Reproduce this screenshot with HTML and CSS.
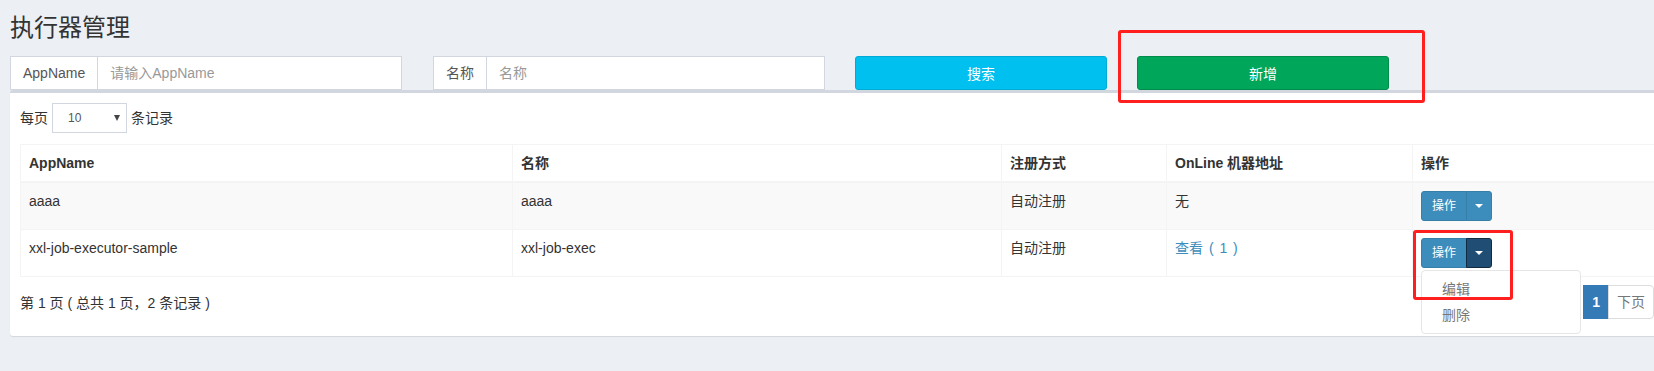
FILE: index.html
```html
<!DOCTYPE html>
<html lang="zh-CN">
<head>
<meta charset="utf-8">
<title>执行器管理</title>
<link rel="stylesheet" href="styles.css">
</head>
<body>
<div class="page">
  <section class="content-header">
    <h1>执行器管理</h1>
  </section>
  <section class="content">
    <div class="filters">
      <div class="input-group">
        <span class="addon">AppName</span>
        <input class="form-control" type="text" placeholder="请输入AppName">
      </div>
      <div class="input-group input-group-last">
        <span class="addon">名称</span>
        <input class="form-control" type="text" placeholder="名称">
      </div>
      <button class="btn btn-search" type="button">搜索</button>
      <div class="mark-wrap">
        <button class="btn btn-add" type="button">新增</button>
        <div class="mark mark-add"></div>
      </div>
    </div>

    <div class="box">
      <div class="length">
        <span>每页</span>
        <span class="select"><span class="select-val">10</span><span class="select-arrow"></span></span>
        <span>条记录</span>
      </div>

      <table class="grid">
        <colgroup>
          <col class="c1"><col class="c2"><col class="c3"><col class="c4"><col class="c5">
        </colgroup>
        <thead>
          <tr>
            <th>AppName</th>
            <th>名称</th>
            <th>注册方式</th>
            <th>OnLine 机器地址</th>
            <th>操作</th>
          </tr>
        </thead>
        <tbody>
          <tr class="odd">
            <td>aaaa</td>
            <td>aaaa</td>
            <td>自动注册</td>
            <td>无</td>
            <td>
              <div class="btn-group">
                <button class="btn-sm btn-op" type="button">操作</button><button class="btn-sm btn-toggle" type="button"><span class="caret"></span></button>
              </div>
            </td>
          </tr>
          <tr>
            <td>xxl-job-executor-sample</td>
            <td>xxl-job-exec</td>
            <td>自动注册</td>
            <td><a class="link" href="#">查看 ( 1 )</a></td>
            <td>
              <div class="btn-group open">
                <button class="btn-sm btn-op" type="button">操作</button><button class="btn-sm btn-toggle active" type="button"><span class="caret"></span></button>
                <ul class="dropdown-menu">
                  <li>编辑</li>
                  <li>删除</li>
                </ul>
                <div class="mark mark-op"></div>
              </div>
            </td>
          </tr>
        </tbody>
      </table>

      <div class="table-footer">
        <div class="info">第 1 页 ( 总共 1 页，2 条记录 )</div>
        <ul class="pagination">
          <li class="active"><span>1</span></li>
          <li class="disabled"><span>下页</span></li>
        </ul>
      </div>
    </div>
  </section>
</div>
</body>
</html>
```

FILE: styles.css
```css
html, body {
  margin: 0;
  padding: 0;
  overflow: hidden;
  background: #ecf0f5;
}

body {
  font-family: "Liberation Sans", Arial, "Noto Sans CJK SC", sans-serif;
  font-size: 14px;
  line-height: 20px;
  color: #333;
}

.page {
  width: 1654px;
  height: 371px;
  overflow: hidden;
}

.content-header {
  padding: 15px 10px 0 10px;
}

.content-header h1 {
  margin: 0;
  font-size: 24px;
  line-height: 26px;
  font-weight: normal;
  color: #333;
}

.content {
  padding: 15px 0 0 10px;
}

/* filters row */
.filters {
  display: flex;
  align-items: stretch;
  height: 34px;
}

.input-group {
  display: flex;
  width: 392px;
  height: 34px;
  box-sizing: border-box;
  margin-right: 31px;
  background: #fff;
}

.input-group-last {
  margin-right: 30px;
}

.addon {
  display: flex;
  align-items: center;
  padding: 0 12px;
  border: 1px solid #d2d6de;
  color: #555;
  background: #fff;
  white-space: nowrap;
}

.form-control {
  flex: 1;
  min-width: 0;
  height: 34px;
  box-sizing: border-box;
  border: 1px solid #d2d6de;
  border-left: 0;
  padding: 6px 12px;
  font-family: inherit;
  font-size: 14px;
  color: #555;
  outline: none;
  background: #fff;
}

.form-control::placeholder {
  color: #999;
}

.btn {
  width: 252px;
  height: 34px;
  box-sizing: border-box;
  border-radius: 3px;
  border: 1px solid transparent;
  color: #fff;
  font-family: inherit;
  font-size: 14px;
  padding: 0;
  cursor: pointer;
}

.btn-search {
  background: #00c0ef;
  border-color: #00acd6;
  margin-right: 30px;
}

.btn-add {
  display: block;
  background: #00a65a;
  border-color: #008d4c;
}

.mark-wrap {
  position: relative;
}

.mark {
  position: absolute;
  border: 3px solid #ff1f1f;
  border-radius: 3px;
  pointer-events: none;
}

.mark-add {
  left: -19px;
  top: -26px;
  right: -36px;
  bottom: -13px;
}

/* box */
.box {
  width: 1654px;
  box-sizing: border-box;
  background: #fff;
  border-top: 3px solid #d2d6de;
  border-radius: 3px;
  box-shadow: 0 1px 1px rgba(0, 0, 0, 0.1);
  padding: 10px 10px 15px 10px;
}

.length {
  display: flex;
  align-items: center;
  gap: 4px;
  height: 30px;
}

.select {
  display: flex;
  align-items: center;
  justify-content: space-between;
  width: 75px;
  height: 30px;
  box-sizing: border-box;
  border: 1px solid #d2d6de;
  padding: 0 6px 0 15px;
  font-size: 12px;
  color: #555;
}

.select-arrow {
  width: 0;
  height: 0;
  border-left: 3.5px solid transparent;
  border-right: 3.5px solid transparent;
  border-top: 6px solid #444;
}

/* table */
.grid {
  margin-top: 11px;
  margin-bottom: 6px;
  width: 1634px;
  table-layout: fixed;
  border-collapse: collapse;
  border: 1px solid #f4f4f4;
}

.c1 { width: 492px; }
.c2 { width: 489px; }
.c3 { width: 165px; }
.c4 { width: 246px; }
.c5 { width: 242px; }

.grid th,
.grid td {
  border: 1px solid #f4f4f4;
  padding: 8px;
  text-align: left;
  vertical-align: top;
  line-height: 20px;
  white-space: nowrap;
}

.grid thead th {
  border-bottom: 2px solid #f4f4f4;
  font-weight: bold;
  color: #333;
}

.grid tbody td {
  height: 30px;
}

.grid tr.odd td {
  background: #f9f9f9;
}

.link {
  color: #3c8dbc;
  text-decoration: none;
  word-spacing: 2px;
}

.btn-group {
  position: relative;
  display: inline-flex;
  vertical-align: top;
}

.btn-sm {
  height: 30px;
  box-sizing: border-box;
  font-family: inherit;
  font-size: 12px;
  line-height: 18px;
  color: #fff;
  background: #3c8dbc;
  border: 1px solid #367fa9;
  cursor: pointer;
}

.btn-op {
  padding: 5px 10px;
  border-radius: 3px 0 0 3px;
}

.btn-toggle {
  padding: 5px 8px;
  margin-left: -1px;
  border-radius: 0 3px 3px 0;
  display: flex;
  align-items: center;
}

.btn-toggle.active {
  background: #204d74;
  border-color: #122b40;
}

.caret {
  display: block;
  width: 0;
  height: 0;
  border-top: 4px solid #fff;
  border-left: 4px solid transparent;
  border-right: 4px solid transparent;
}

.dropdown-menu {
  position: absolute;
  top: 100%;
  left: 0;
  margin: 2px 0 0 0;
  padding: 5px 0;
  list-style: none;
  min-width: 160px;
  box-sizing: border-box;
  background: #fff;
  border: 1px solid #e6e6e6;
  border-radius: 4px;
  z-index: 5;
}

.dropdown-menu li {
  padding: 3px 20px;
  line-height: 20px;
  color: #777;
}

.mark-op {
  left: -8px;
  top: -8px;
  right: -21px;
  bottom: -32px;
  z-index: 6;
}

/* footer */
.table-footer {
  display: flex;
  justify-content: space-between;
  align-items: flex-start;
}

.info {
  padding-top: 10px;
}

.pagination {
  display: flex;
  margin: 2px 0;
  padding: 0;
  list-style: none;
}

.pagination li span {
  display: block;
  padding: 6px 8px;
  line-height: 20px;
  border: 1px solid #ddd;
  background: #fff;
  color: #777;
}

.pagination li + li span {
  margin-left: -1px;
}

.pagination li.active span {
  background: #337ab7;
  border-color: #337ab7;
  color: #fff;
  font-weight: bold;
}

.pagination li.disabled span {
  border-radius: 0 4px 4px 0;
}
```
